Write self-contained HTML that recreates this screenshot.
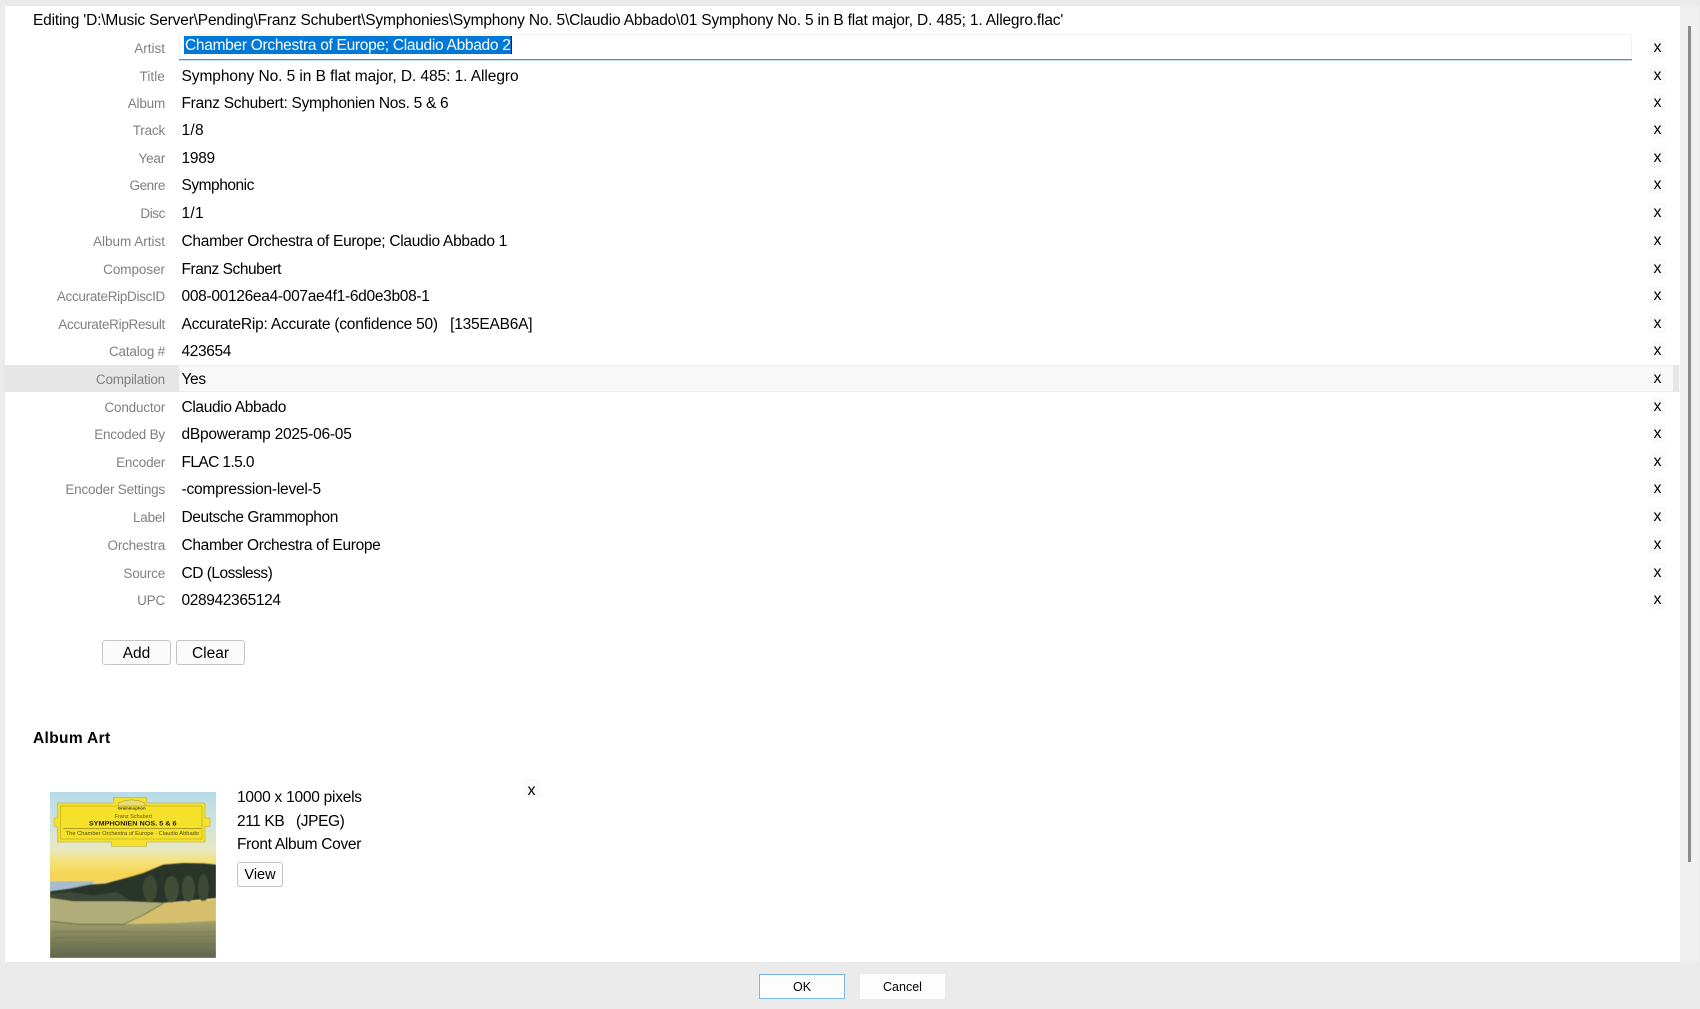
<!DOCTYPE html>
<html lang="en"><head><meta charset="utf-8"><title>Edit Tags</title>
<style>
html,body{margin:0;padding:0;width:1700px;height:1009px;overflow:hidden;background:#ebebeb;font-family:"Liberation Sans",sans-serif;color:#000}
*{box-sizing:border-box}
.abs{position:absolute;white-space:pre}
#panel{position:absolute;left:5px;top:6px;width:1675px;height:956px;background:#fff}
#track{position:absolute;left:1680px;top:6px;width:19px;height:956px;background:#f0f0f0}
#thumb{position:absolute;left:1688px;top:26px;width:3px;height:836px;background:#8b8b8b}
.row{position:absolute;left:5px;width:1675px;height:27px;font-size:15.5px;line-height:27px}
.row .l{position:absolute;left:0;top:1px;width:160px;text-align:right;color:#808080;font-size:13.5px;letter-spacing:-.2px;white-space:pre}
.row .v{position:absolute;left:176.5px;top:1px;white-space:pre}
.row .x{position:absolute;left:1644px;top:4px;width:17px;height:19px;background:#fafafa;border-radius:3px;text-align:center;line-height:19.5px;font-size:16px}
.hl{background:#f8f8f8;box-shadow:inset 0 1px #eee,inset 0 -1px #eee}
.hl .bgl{position:absolute;left:0;top:0;width:174px;height:100%;background:#e6e6e6}
.hl .bgr{position:absolute;left:1668px;top:0;width:6px;height:100%;background:#e6e6e6}
.btn{position:absolute;background:#fbfbfb;border:1px solid #c4c4c4;border-radius:3px;text-align:center;color:#000}
</style></head><body>
<div id="panel"></div><div id="track"></div><div id="thumb"></div>
<div class="abs" style="left:33px;top:12px;font-size:15.5px;line-height:18px;letter-spacing:-.176px">Editing 'D:\Music Server\Pending\Franz Schubert\Symphonies\Symphony No. 5\Claudio Abbado\01 Symphony No. 5 in B flat major, D. 485; 1. Allegro.flac'</div>

<div class="row" style="top:34px"><span class="l" style="letter-spacing:0">Artist</span><span class="x">x</span></div>
<div class="abs" style="left:179px;top:34px;width:1453px;height:26px;border:1px solid #f2f2f2;border-bottom:0;box-shadow:0 1px #c5dff5"></div>
<div class="abs" style="left:179px;top:59px;width:1453px;height:1px;background:#4a90d9"></div>
<div class="abs" style="left:184px;top:36px;width:328px;height:18px;background:#0078d7;border-right:1px solid #111;color:#fff;font-size:15.5px;line-height:20px;padding-left:1px;letter-spacing:-.29px;overflow:hidden">Chamber Orchestra of Europe; Claudio Abbado 2</div>

<div class="row" style="top:62px"><span class="l" style="letter-spacing:.1px">Title</span><span class="v" style="letter-spacing:-.065px">Symphony No. 5 in B flat major, D. 485: 1. Allegro</span><span class="x">x</span></div>
<div class="row" style="top:89px"><span class="l">Album</span><span class="v" style="letter-spacing:-.285px">Franz Schubert: Symphonien Nos. 5 &amp; 6</span><span class="x">x</span></div>
<div class="row" style="top:116px"><span class="l">Track</span><span class="v" style="letter-spacing:.3px">1/8</span><span class="x">x</span></div>
<div class="row" style="top:144px"><span class="l">Year</span><span class="v" style="letter-spacing:-.27px">1989</span><span class="x">x</span></div>
<div class="row" style="top:171px"><span class="l" style="letter-spacing:-.4px">Genre</span><span class="v" style="letter-spacing:-.48px">Symphonic</span><span class="x">x</span></div>
<div class="row" style="top:199px"><span class="l" style="letter-spacing:-.4px">Disc</span><span class="v" style="letter-spacing:.3px">1/1</span><span class="x">x</span></div>
<div class="row" style="top:227px"><span class="l" style="letter-spacing:0">Album Artist</span><span class="v" style="letter-spacing:-.29px">Chamber Orchestra of Europe; Claudio Abbado 1</span><span class="x">x</span></div>
<div class="row" style="top:255px"><span class="l" style="letter-spacing:-.05px">Composer</span><span class="v" style="letter-spacing:-.46px">Franz Schubert</span><span class="x">x</span></div>
<div class="row" style="top:282px"><span class="l" style="letter-spacing:-.3px">AccurateRipDiscID</span><span class="v" style="letter-spacing:-.3px">008-00126ea4-007ae4f1-6d0e3b08-1</span><span class="x">x</span></div>
<div class="row" style="top:310px"><span class="l" style="letter-spacing:-.3px">AccurateRipResult</span><span class="v" style="letter-spacing:-.22px">AccurateRip: Accurate (confidence 50)   [135EAB6A]</span><span class="x">x</span></div>
<div class="row" style="top:337px"><span class="l">Catalog #</span><span class="v" style="letter-spacing:-.36px">423654</span><span class="x">x</span></div>
<div class="row hl" style="top:365px"><span class="bgl"></span><span class="bgr"></span><span class="l">Compilation</span><span class="v" style="letter-spacing:-.36px">Yes</span><span class="x" style="background:#f8f8f8">x</span></div>
<div class="row" style="top:393px"><span class="l">Conductor</span><span class="v" style="letter-spacing:-.35px">Claudio Abbado</span><span class="x">x</span></div>
<div class="row" style="top:420px"><span class="l">Encoded By</span><span class="v" style="letter-spacing:-.23px">dBpoweramp 2025-06-05</span><span class="x">x</span></div>
<div class="row" style="top:448px"><span class="l">Encoder</span><span class="v" style="letter-spacing:-.6px">FLAC 1.5.0</span><span class="x">x</span></div>
<div class="row" style="top:475px"><span class="l">Encoder Settings</span><span class="v" style="letter-spacing:-.22px">-compression-level-5</span><span class="x">x</span></div>
<div class="row" style="top:503px"><span class="l">Label</span><span class="v" style="letter-spacing:-.43px">Deutsche Grammophon</span><span class="x">x</span></div>
<div class="row" style="top:531px"><span class="l">Orchestra</span><span class="v" style="letter-spacing:-.32px">Chamber Orchestra of Europe</span><span class="x">x</span></div>
<div class="row" style="top:559px"><span class="l">Source</span><span class="v" style="letter-spacing:-.5px">CD (Lossless)</span><span class="x">x</span></div>
<div class="row" style="top:586px"><span class="l">UPC</span><span class="v" style="letter-spacing:-.36px">028942365124</span><span class="x">x</span></div>

<div class="btn" style="left:102px;top:640px;width:69px;height:25px;line-height:25px;font-size:15.5px">Add</div>
<div class="btn" style="left:176px;top:640px;width:69px;height:25px;line-height:25px;font-size:15.5px">Clear</div>

<div class="abs" style="left:33px;top:730px;font-size:15.5px;line-height:18px;font-weight:bold;letter-spacing:.35px">Album Art</div>

<svg class="abs" style="left:50px;top:792px" width="166" height="166" viewBox="0 0 498 498" xmlns="http://www.w3.org/2000/svg">
<defs><linearGradient id="sky" x1="0" y1="0" x2="0" y2="1">
<stop offset="0" stop-color="#b8dbe8"/><stop offset=".2" stop-color="#cfe4dc"/><stop offset=".34" stop-color="#e6e8c4"/><stop offset=".42" stop-color="#f5e27a"/><stop offset=".5" stop-color="#f5d34e"/><stop offset=".56" stop-color="#f0d878"/></linearGradient>
<linearGradient id="field" x1="0" y1="0" x2="0" y2="1"><stop offset="0" stop-color="#a0a070"/><stop offset=".4" stop-color="#84875c"/><stop offset="1" stop-color="#5f664c"/></linearGradient>
<filter id="soft"><feGaussianBlur stdDeviation="1.6"/></filter></defs>
<rect width="498" height="498" fill="url(#sky)"/>
<rect x="0" y="268" width="130" height="30" fill="#a9bccb"/>
<g filter="url(#soft)">
<path d="M0 298L60 290L120 278L165 275L210 263L250 252L280 243L340 218L400 213L460 214L498 218V318L340 333L220 328L70 328L0 318Z" fill="#2c3629"/>
<path d="M0 305L60 300L130 310L200 300L240 325L60 325L0 318Z" fill="#3e4838"/>
<ellipse cx="300" cy="290" rx="21" ry="40" fill="#3e4836"/>
<ellipse cx="365" cy="292" rx="21" ry="40" fill="#434d39"/>
<ellipse cx="415" cy="290" rx="19" ry="40" fill="#434d39"/>
<ellipse cx="460" cy="288" rx="16" ry="42" fill="#3e4836"/>
<path d="M0 318L70 328L220 328L340 333L280 368L220 396L90 396L0 388Z" fill="#b0ad7a"/>
<path d="M340 333L470 326L498 323V386L370 393L220 396L280 368Z" fill="#d6bf6c"/>
<path d="M0 388L90 396L220 396L370 393L498 386V498H0Z" fill="url(#field)"/>
<path d="M0 388L90 397L220 397L280 369L340 334" fill="none" stroke="#5a5f40" stroke-width="2.5"/>
<path d="M0 420H498M0 438L498 432M0 456H498M0 474L498 478" stroke="#6a6f50" stroke-width="3" opacity=".5" fill="none"/>
</g>
<path d="M22 33H190V16H290V33H465V78H480V103H465V150H290V163H185V150H22V103H12V78H22Z" fill="#f6e12a" stroke="#b8a825" stroke-width="1.5"/>
<rect x="31" y="42" width="425" height="99" fill="none" stroke="#a89a20" stroke-width="1.5"/>
<path d="M205 33Q245 14 285 33V42H205Z" fill="#e8dc70" stroke="#6f6a2c"/>
<text x="245" y="53" font-size="10" font-weight="bold" font-family="Liberation Sans, sans-serif" text-anchor="middle" fill="#3a3820" textLength="84" lengthAdjust="spacingAndGlyphs">Grammophon</text>
<text x="250" y="78" font-size="15" font-family="Liberation Sans, sans-serif" text-anchor="middle" fill="#5a5424" textLength="112" lengthAdjust="spacingAndGlyphs">Franz Schubert</text>
<text x="248" y="100" font-size="20" font-weight="bold" font-family="Liberation Sans, sans-serif" text-anchor="middle" fill="#25230c" textLength="263" lengthAdjust="spacingAndGlyphs">SYMPHONIEN NOS. 5 &amp; 6</text>
<rect x="40" y="108" width="413" height="1.5" fill="#5f5a20"/>
<text x="247" y="129" font-size="15" font-family="Liberation Sans, sans-serif" text-anchor="middle" fill="#4d4920" textLength="400" lengthAdjust="spacingAndGlyphs">The Chamber Orchestra of Europe · Claudio Abbado</text>
</svg>

<div class="abs" style="left:237px;top:789px;font-size:15.5px;line-height:18px;letter-spacing:-.25px">1000 x 1000 pixels</div>
<div class="abs" style="left:237px;top:813px;font-size:15.5px;line-height:18px;letter-spacing:-.4px">211 KB   (JPEG)</div>
<div class="abs" style="left:237px;top:836px;font-size:15.5px;line-height:18px;letter-spacing:-.3px">Front Album Cover</div>
<div class="btn" style="left:237px;top:862px;width:46px;height:25px;line-height:24px;font-size:14.5px">View</div>
<div class="abs" style="left:523px;top:779px;width:17px;height:19px;background:#fafafa;border-radius:3px;text-align:center;font-size:16px;line-height:23px">x</div>

<div class="abs" style="left:759px;top:974px;width:86px;height:25px;background:#fdfdfd;border:1px solid #7ab6e8;text-align:center;font-size:12.5px;line-height:24px">OK</div>
<div class="abs" style="left:860px;top:974px;width:85px;height:25px;background:#fdfdfd;text-align:center;font-size:12.5px;line-height:26px">Cancel</div>
</body></html>
